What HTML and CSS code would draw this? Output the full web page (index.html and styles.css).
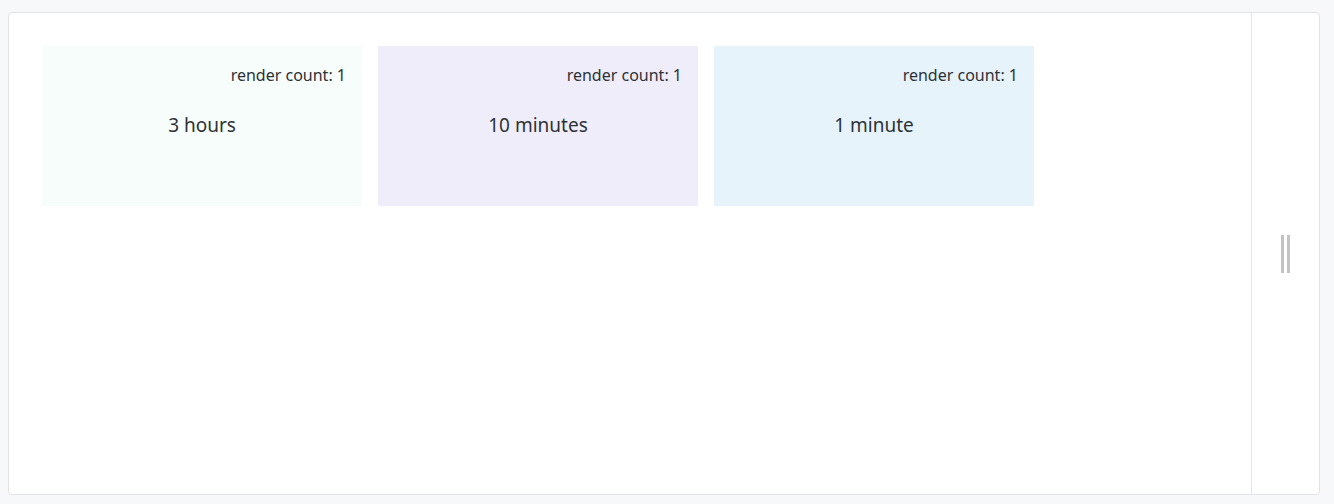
FILE: index.html
```html
<!DOCTYPE html>
<html>
<head>
<meta charset="utf-8">
<link rel="stylesheet" href="styles.css">
</head>
<body>
<div class="panel">
  <div class="preview">
    <div class="cards">
      <div class="card mint">
        <div class="count">render count: 1</div>
        <div class="value">3 hours</div>
      </div>
      <div class="card lavender">
        <div class="count">render count: 1</div>
        <div class="value">10 minutes</div>
      </div>
      <div class="card sky">
        <div class="count">render count: 1</div>
        <div class="value">1 minute</div>
      </div>
    </div>
  </div>
  <div class="handle">
    <div class="grip"><span></span><span></span></div>
  </div>
</div>
</body>
</html>
```

FILE: styles.css
```css
html, body {
  margin: 0;
  background: #f7f8fa;
}
body {
  padding: 12px 14px 9px 8px;
  font-family: "Noto Sans", "Liberation Sans", sans-serif;
  color: #2e3237;
}
.panel {
  display: flex;
  height: 483px;
  box-sizing: border-box;
  background: #fff;
  border: 1px solid #e2e4e7;
  border-radius: 4px;
}
.preview {
  flex: 1;
  padding: 33px;
  border-right: 1px solid #e2e4e7;
}
.cards {
  display: flex;
  gap: 16px;
}
.card {
  width: 320px;
  height: 160px;
  box-sizing: border-box;
  padding: 16px;
}
.mint { background: #f6fdfa; }
.lavender { background: #efedfa; }
.sky { background: #e6f3fb; }
.count {
  text-align: right;
  font-size: 16px;
  line-height: 26px;
}
.value {
  margin-top: 25px;
  text-align: center;
  font-size: 19px;
  line-height: 24px;
}
.handle {
  width: 67px;
  display: flex;
  align-items: center;
  justify-content: center;
}
.grip {
  display: flex;
  gap: 3px;
}
.grip span {
  width: 3px;
  height: 38px;
  background: #c3c3c3;
}
```
